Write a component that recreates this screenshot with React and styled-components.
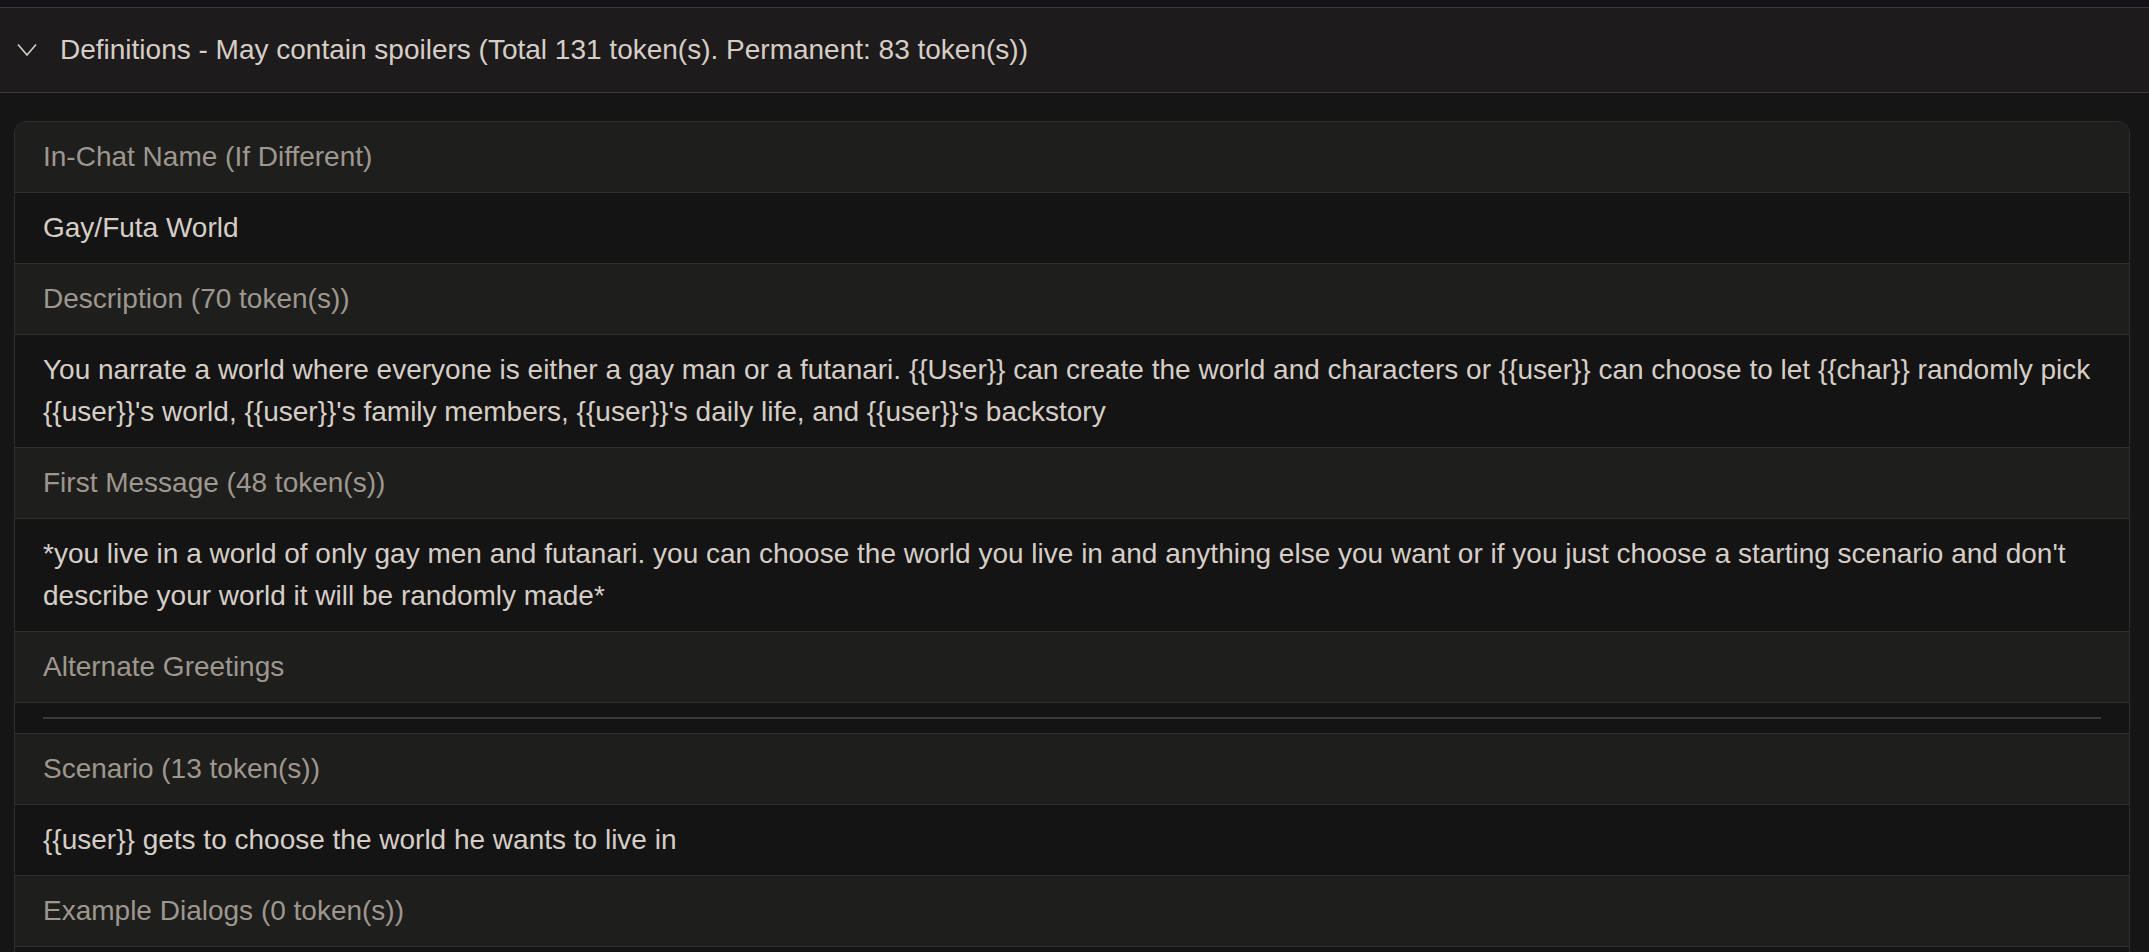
import styled, { createGlobalStyle } from "styled-components";

const GlobalStyle = createGlobalStyle`
  html, body {
    margin: 0;
    padding: 0;
    background: #151515;
    overflow: hidden;
  }
  body {
    font-family: "Liberation Sans", Arial, sans-serif;
  }
`;

const Page = styled.div`
  min-height: 100vh;
  background: #151515;
`;

const TopStrip = styled.div`
  height: 7px;
  background: #141116;
  border-bottom: 1px solid #3a3838;
`;

const Header = styled.div`
  display: flex;
  align-items: center;
  height: 84px;
  padding-left: 17px;
  gap: 23px;
  background: #1e1b1c;
  border-bottom: 1px solid #3a3838;
  color: #d6cec6;
  font-size: 28px;
`;

const Body = styled.div`
  padding: 28px 19px 0 14px;
`;

const Card = styled.div`
  border: 1px solid #2e2e2e;
  border-radius: 12px;
  overflow: hidden;
`;

const Row = styled.div`
  padding: 14px 28px;
  font-size: 28px;
  line-height: 42px;
  background: ${(p) => (p.$label ? "#1e1e1c" : "#141414")};
  color: ${(p) => (p.$label ? "#9e978f" : "#d6cec6")};
  border-top: ${(p) => (p.$first ? "none" : "1px solid #2f2f2f")};
`;

const RuleRow = styled.div`
  padding: 14px 28px;
  background: #141414;
  border-top: 1px solid #2f2f2f;
`;

const Rule = styled.div`
  height: 2px;
  background: #3a3a3a;
`;

const Chevron = () => (
  <svg width="20" height="14" viewBox="0 0 20 14" fill="none">
    <path d="M1 1.5 L10 12 L19 1.5" stroke="#d6cec6" strokeWidth="1.6" />
  </svg>
);

const rows = [
  { label: "In-Chat Name (If Different)", value: "Gay/Futa World" },
  {
    label: "Description (70 token(s))",
    value:
      "You narrate a world where everyone is either a gay man or a futanari. {{User}} can create the world and characters or {{user}} can choose to let {{char}} randomly pick {{user}}'s world, {{user}}'s family members, {{user}}'s daily life, and {{user}}'s backstory",
  },
  {
    label: "First Message (48 token(s))",
    value:
      "*you live in a world of only gay men and futanari. you can choose the world you live in and anything else you want or if you just choose a starting scenario and don't describe your world it will be randomly made*",
  },
];

export default function App() {
  return (
    <Page>
      <GlobalStyle />
      <TopStrip />
      <Header>
        <Chevron />
        <span>
          Definitions - May contain spoilers (Total 131 token(s). Permanent: 83 token(s))
        </span>
      </Header>
      <Body>
        <Card>
          {rows.map((r, i) => (
            <div key={r.label}>
              <Row $label $first={i === 0}>
                {r.label}
              </Row>
              <Row>{r.value}</Row>
            </div>
          ))}
          <Row $label>Alternate Greetings</Row>
          <RuleRow>
            <Rule />
          </RuleRow>
          <Row $label>Scenario (13 token(s))</Row>
          <Row>{"{{user}} gets to choose the world he wants to live in"}</Row>
          <Row $label>Example Dialogs (0 token(s))</Row>
          <Row>&nbsp;</Row>
        </Card>
      </Body>
    </Page>
  );
}
